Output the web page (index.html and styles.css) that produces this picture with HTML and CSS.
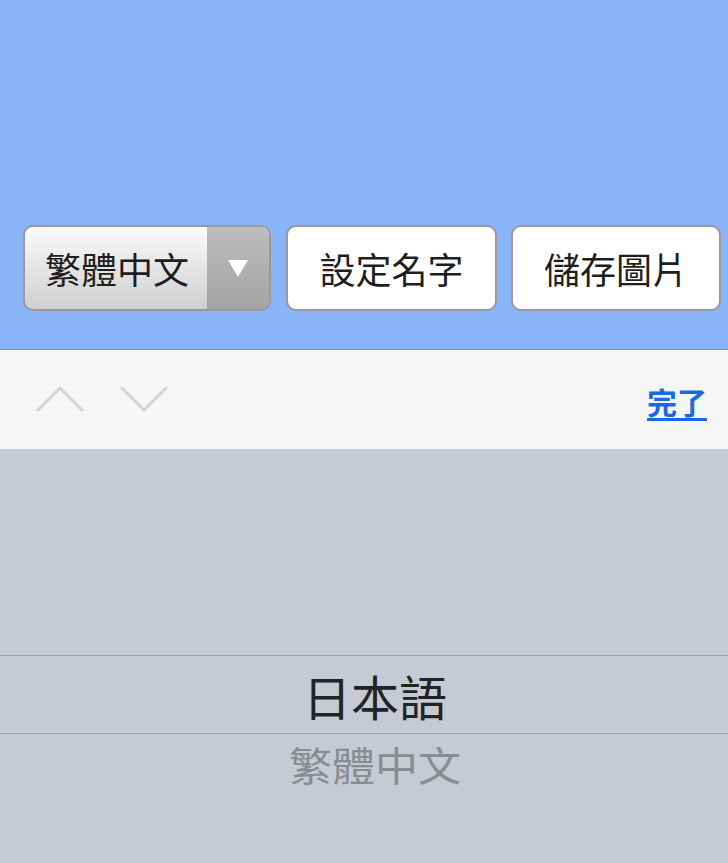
FILE: index.html
```html
<!DOCTYPE html>
<html lang="zh-Hant">
<head>
  <meta charset="UTF-8">
  <meta name="viewport" content="width=device-width, initial-scale=1.0">
  <title>名字圖片</title>
  <link rel="stylesheet" href="styles.css">
</head>
<body>
  <div id="stage">
    <div class="controls">
      <div class="lang-select">
        <span class="lang-value">繁體中文</span>
        <span class="lang-arrow"></span>
      </div>
      <button class="action-button">設定名字</button>
      <button class="action-button">儲存圖片</button>
    </div>
  </div>

  <div class="picker-toolbar">
    <div class="nav-arrows">
      <svg width="48" height="28" viewBox="0 0 48 28"><path d="M2 25 L24 3 L46 25" fill="none" stroke="#d2d2d2" stroke-width="3" stroke-linecap="round"/></svg>
      <svg width="48" height="28" viewBox="0 0 48 28"><path d="M2 3 L24 25 L46 3" fill="none" stroke="#d2d2d2" stroke-width="3" stroke-linecap="round"/></svg>
    </div>
    <a class="done-link">完了</a>
  </div>

  <div class="picker-wheel">
    <div class="wheel-row selected">日本語</div>
    <div class="wheel-row faded">繁體中文</div>
  </div>
</body>
</html>
```

FILE: styles.css
```css
body {
  margin: 0;
  width: 728px;
  height: 863px;
  overflow: hidden;
  font-family: "Noto Sans CJK TC", "Noto Sans", sans-serif;
  background-color: #c6cad3;
}

#stage {
  height: 350px;
  background-color: #8ab4f8;
  border-bottom: 1px solid #8791a3;
  display: flex;
  align-items: flex-end;
  box-sizing: border-box;
  padding: 0 7px 38px 23px;
}

.controls {
  display: flex;
  gap: 15px;
}

.lang-select {
  width: 248px;
  height: 86px;
  box-sizing: border-box;
  border: 2px solid #999;
  border-radius: 10px;
  display: flex;
  overflow: hidden;
  background: linear-gradient(#fbfbfb, #cfcfcf);
}

.lang-value {
  flex: 1;
  display: flex;
  align-items: center;
  padding-left: 20px;
  font-size: 36px;
  color: #1e1e1e;
}

.lang-arrow {
  width: 62px;
  background: linear-gradient(#bdbdbd, #a3a3a3);
  display: flex;
  align-items: center;
  justify-content: center;
}

.lang-arrow::after {
  content: "";
  border-left: 10px solid transparent;
  border-right: 10px solid transparent;
  border-top: 17px solid #fff;
}

.action-button {
  width: 211px;
  height: 86px;
  box-sizing: border-box;
  border: 2px solid #999;
  border-radius: 10px;
  background-color: #fff;
  font-family: inherit;
  font-size: 36px;
  color: #1e1e1e;
  padding: 0;
}

.action-button + .action-button {
  width: 210px;
  margin-left: -1px;
}

.picker-toolbar {
  height: 99px;
  background-color: #f6f6f6;
  display: flex;
  align-items: center;
  justify-content: space-between;
  padding: 0 21px 0 36px;
}

.nav-arrows {
  display: flex;
  gap: 36px;
  margin-top: -2px;
}

.done-link {
  color: #1769e8;
  font-size: 30px;
  font-weight: bold;
  text-decoration: underline;
  text-underline-offset: 4px;
  margin-top: 2px;
}

.picker-wheel {
  padding-top: 206px;
  padding-left: 22px;
}

.wheel-row {
  text-align: center;
  line-height: 1;
}

.wheel-row.selected {
  height: 77px;
  border-top: 1px solid #9ca0a8;
  border-bottom: 1px solid #9ca0a8;
  margin-left: -22px;
  padding-left: 22px;
  font-size: 48px;
  color: #232323;
  display: flex;
  align-items: center;
  justify-content: center;
}

.wheel-row.faded {
  font-size: 43px;
  color: #8a8c90;
  padding-top: 11px;
  transform: scaleY(0.92);
  transform-origin: top;
}
```
